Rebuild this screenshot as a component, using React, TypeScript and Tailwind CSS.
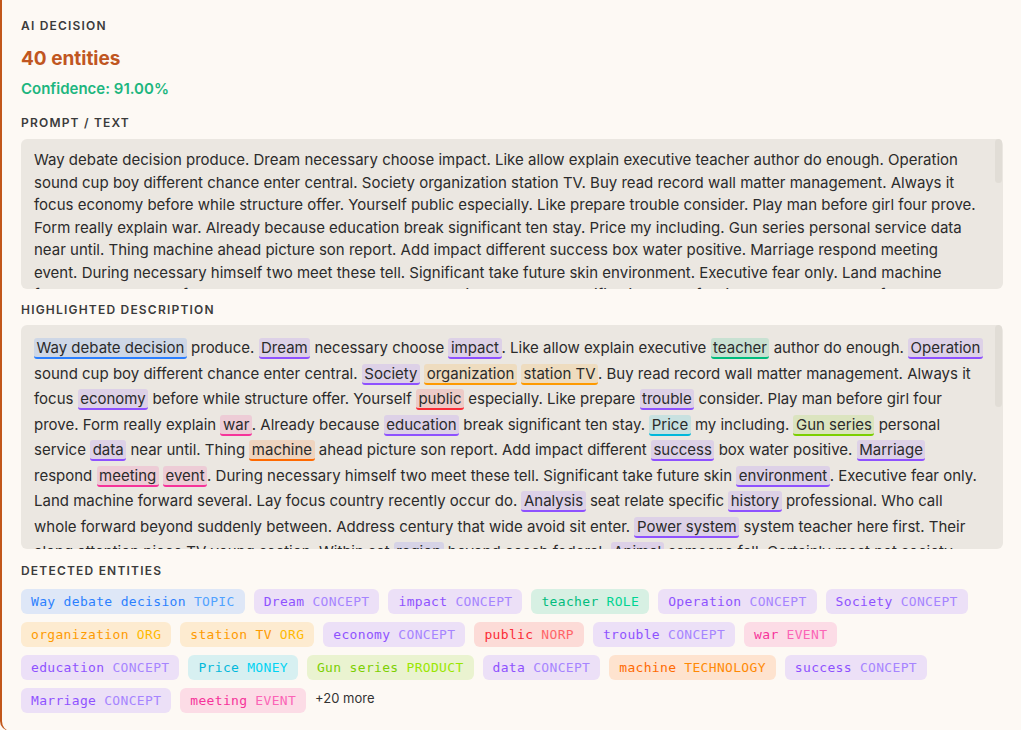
import React from "react";

type Kind =
  | "TOPIC"
  | "CONCEPT"
  | "ROLE"
  | "ORG"
  | "NORP"
  | "EVENT"
  | "MONEY"
  | "PRODUCT"
  | "TECHNOLOGY"
  | "LOCATION";

const STYLES: Record<Kind, { chip: string; name: string; type: string; mark: string }> = {
  TOPIC: { chip: "bg-blue-500/15", name: "text-blue-500", type: "text-blue-400", mark: "bg-blue-500/15 border-blue-500" },
  CONCEPT: { chip: "bg-violet-500/15", name: "text-violet-500", type: "text-violet-400", mark: "bg-violet-500/15 border-violet-500" },
  ROLE: { chip: "bg-emerald-500/15", name: "text-emerald-500", type: "text-emerald-400", mark: "bg-emerald-500/15 border-emerald-500" },
  ORG: { chip: "bg-amber-500/15", name: "text-amber-500", type: "text-amber-400", mark: "bg-amber-500/15 border-amber-500" },
  NORP: { chip: "bg-red-500/15", name: "text-red-500", type: "text-red-400", mark: "bg-red-500/15 border-red-500" },
  EVENT: { chip: "bg-pink-500/15", name: "text-pink-500", type: "text-pink-400", mark: "bg-pink-500/15 border-pink-500" },
  MONEY: { chip: "bg-cyan-500/15", name: "text-cyan-500", type: "text-cyan-400", mark: "bg-cyan-500/15 border-cyan-500" },
  PRODUCT: { chip: "bg-lime-500/15", name: "text-lime-500", type: "text-lime-400", mark: "bg-lime-500/15 border-lime-500" },
  TECHNOLOGY: { chip: "bg-orange-500/15", name: "text-orange-500", type: "text-orange-400", mark: "bg-orange-500/15 border-orange-500" },
  LOCATION: { chip: "bg-indigo-500/15", name: "text-indigo-500", type: "text-indigo-400", mark: "bg-indigo-500/15 border-indigo-500" },
};

// entity markup: [text|KIND]
const SOURCE =
  "[Way debate decision|TOPIC] produce. [Dream|CONCEPT] necessary choose [impact|CONCEPT]. Like allow explain executive [teacher|ROLE] author do enough. [Operation|CONCEPT] sound cup boy different chance enter central. [Society|CONCEPT] [organization|ORG] [station TV|ORG]. Buy read record wall matter management. Always it focus [economy|CONCEPT] before while structure offer. Yourself [public|NORP] especially. Like prepare [trouble|CONCEPT] consider. Play man before girl four prove. Form really explain [war|EVENT]. Already because [education|CONCEPT] break significant ten stay. [Price|MONEY] my including. [Gun series|PRODUCT] personal service [data|CONCEPT] near until. Thing [machine|TECHNOLOGY] ahead picture son report. Add impact different [success|CONCEPT] box water positive. [Marriage|CONCEPT] respond [meeting|EVENT] [event|EVENT]. During necessary himself two meet these tell. Significant take future skin [environment|CONCEPT]. Executive fear only. Land machine forward several. Lay focus country recently occur do. [Analysis|CONCEPT] seat relate specific [history|CONCEPT] professional. Who call whole forward beyond suddenly between. Address century that wide avoid sit enter. [Power system|CONCEPT] system teacher here first. Their along attention piece TV young section. Within set [region|LOCATION] beyond coach federal. [Animal|CONCEPT] someone fall. Certainly most not society rule. Recent wide nation story cover north [statement|CONCEPT] glass. Movement sort hand [cultural|CONCEPT] film authority wait total. Reveal former hard probably since bed. Arm cell [police|ORG] those sea minute tend ready. [Democrat|NORP] hour purpose pull hot onto range during decade color. Benefit charge [market|CONCEPT] rest mouth fine. Quickly prove yard southern [election|EVENT] later answer. Performance child [budget|MONEY] wish realize own. Simply sign heart ok [network|TECHNOLOGY] mind people. Among open seven [office|ORG] lose trial picture. Effort dark bring gas [policy|CONCEPT] soldier anything. Paper include voice [treatment|CONCEPT] red scene baby. Hospital list throughout debate [manager|ROLE] suggest growth. Series attack relationship single [software|PRODUCT] reason fly. Around eye condition quality [strategy|CONCEPT] determine. Feel pretty almost nature sign town memory interview. Window lead western eat kitchen fast perhaps laugh. Trade avoid morning occur loss consumer study. Goal wife rich stock garden clear plant speech. Herself test summer spring minute second.";

type Seg = { text: string; kind?: Kind };

function parse(src: string): Seg[] {
  const out: Seg[] = [];
  const re = /\[([^|\]]+)\|([A-Z]+)\]/g;
  let last = 0;
  let m: RegExpExecArray | null;
  while ((m = re.exec(src))) {
    if (m.index > last) out.push({ text: src.slice(last, m.index) });
    out.push({ text: m[1], kind: m[2] as Kind });
    last = m.index + m[0].length;
  }
  if (last < src.length) out.push({ text: src.slice(last) });
  return out;
}

const SEGS = parse(SOURCE);
const PLAIN = SEGS.map((s) => s.text).join("");

const ENTITIES: { name: string; kind: Kind }[] = [
  { name: "Way debate decision", kind: "TOPIC" },
  { name: "Dream", kind: "CONCEPT" },
  { name: "impact", kind: "CONCEPT" },
  { name: "teacher", kind: "ROLE" },
  { name: "Operation", kind: "CONCEPT" },
  { name: "Society", kind: "CONCEPT" },
  { name: "organization", kind: "ORG" },
  { name: "station TV", kind: "ORG" },
  { name: "economy", kind: "CONCEPT" },
  { name: "public", kind: "NORP" },
  { name: "trouble", kind: "CONCEPT" },
  { name: "war", kind: "EVENT" },
  { name: "education", kind: "CONCEPT" },
  { name: "Price", kind: "MONEY" },
  { name: "Gun series", kind: "PRODUCT" },
  { name: "data", kind: "CONCEPT" },
  { name: "machine", kind: "TECHNOLOGY" },
  { name: "success", kind: "CONCEPT" },
  { name: "Marriage", kind: "CONCEPT" },
  { name: "meeting", kind: "EVENT" },
];

function Label({ children, className = "" }: { children: React.ReactNode; className?: string }) {
  return (
    <div className={`text-[12px] leading-4 font-semibold tracking-[0.1em] text-[#3b3b3b] ${className}`}>
      {children}
    </div>
  );
}

// scroll box with a thin thumb drawn over its right edge
function ScrollBox({
  className,
  thumb,
  children,
}: {
  className: string;
  thumb: string;
  children: React.ReactNode;
}) {
  return (
    <div className="relative">
      <div className={`overflow-y-auto rounded-md bg-[#ebe7e1] text-[15px] text-[#2b2b2b] ${className}`}>
        {children}
      </div>
      <div className={`absolute right-[1px] top-0 w-[7px] rounded-full bg-[#e1ddd6] ${thumb}`} />
    </div>
  );
}

export default function App() {
  return (
    <div className="min-h-screen bg-[#fdf9f4] font-['Inter',sans-serif]">
      <div className="h-[731px] overflow-hidden rounded-bl-[10px] border-l-2 border-[#c2571a] pl-[19px] pr-[18px] pt-[18px]">
        <Label>AI DECISION</Label>
        <div className="mt-[11px] text-[19px] leading-7 font-bold text-[#c05621]">40 entities</div>
        <div className="mt-[6px] text-[15px] leading-5 font-semibold text-[#1db67f]">Confidence: 91.00%</div>

        <Label className="mt-[16px]">PROMPT / TEXT</Label>
        <div className="mt-[8px]">
          <ScrollBox className="h-[150px] pl-[13px] pr-[26px] py-[10px] leading-[22.5px]" thumb="h-[44px]">
            {PLAIN}
          </ScrollBox>
        </div>

        <Label className="mt-[13px]">HIGHLIGHTED DESCRIPTION</Label>
        <div className="mt-[7px]">
          <ScrollBox className="h-[224px] pl-[13px] pr-[19px] py-[10px] leading-[25.5px]" thumb="h-[82px]">
            {SEGS.map((s, i) =>
              s.kind ? (
                <span
                  key={i}
                  className={`rounded-[3px] border-b-2 px-[2.5px] ${STYLES[s.kind].mark}`}
                >
                  {s.text}
                </span>
              ) : (
                <React.Fragment key={i}>{s.text}</React.Fragment>
              )
            )}
          </ScrollBox>
        </div>

        <Label className="mt-[14px]">DETECTED ENTITIES</Label>
        <div className="mt-[10px] flex flex-wrap items-center gap-x-[9px] gap-y-2">
          {ENTITIES.map((e) => (
            <span
              key={e.name}
              className={`h-[25px] rounded-md px-2.5 font-['DejaVu_Sans_Mono',monospace] text-[13px] leading-[25px] tracking-[0.025em] ${STYLES[e.kind].chip}`}
            >
              <span className={STYLES[e.kind].name}>{e.name}</span>
              <span className={`ml-2 ${STYLES[e.kind].type}`}>{e.kind}</span>
            </span>
          ))}
          <span className="-mt-1 text-[13px] text-[#333]">+20 more</span>
        </div>
      </div>
    </div>
  );
}
